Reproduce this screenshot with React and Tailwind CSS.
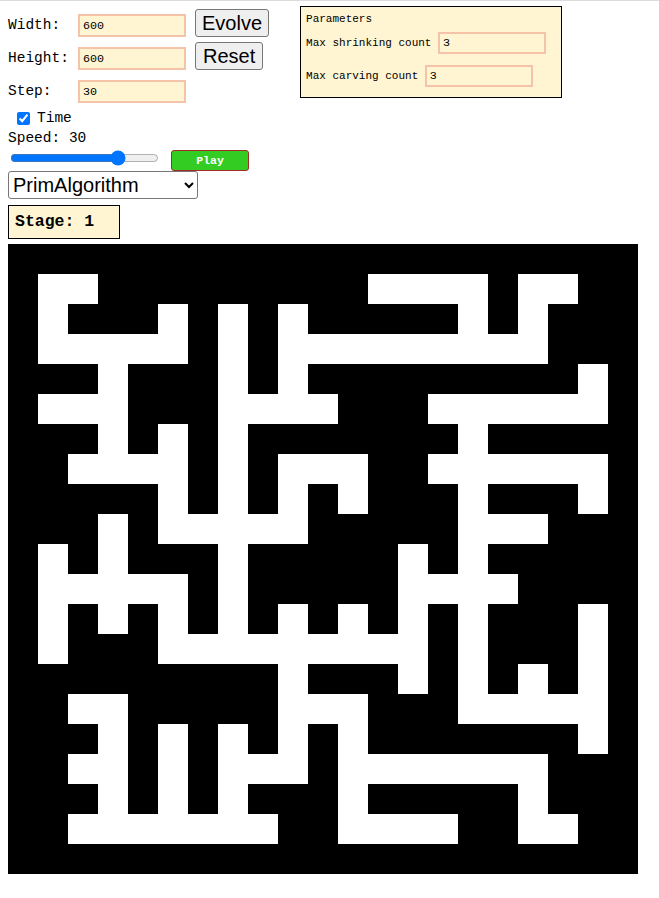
import React from 'react';

const MAZE = [
  '#####################',
  '#..#########....#..##',
  '#.###.#.#.#####.#.###',
  '#.....#.#.........###',
  '###.###.#.#########.#',
  '#...###....###......#',
  '###.#.#.#######.#####',
  '##....#.#...##......#',
  '#####.#.#.#.###.###.#',
  '###.#.....#####...###',
  '#.#.###.#####.#.#####',
  '#.....#.#####....####',
  '#.#.#.#.#.#.#.#.###.#',
  '#.###.........#.###.#',
  '#########.###.#.#.#.#',
  '##..#####...###.....#',
  '###.#.#.#.#.#######.#',
  '##..#.#...#.......###',
  '###.#.#.###.#####.###',
  '##.......##....##..##',
  '#####################',
];

const mono = "font-['Liberation_Mono','DejaVu_Sans_Mono',monospace]";
const sans = "font-['Liberation_Sans',Arial,sans-serif]";

function Field({ label, value }) {
  return (
    <div className="flex items-center h-[23px]">
      <span className="w-[70px] text-[14.5px] leading-none text-black">{label}</span>
      <input
        defaultValue={value}
        className={`w-[108px] h-[23px] border-2 border-[#f5c4a8] bg-[#fff5d3] pl-[3px] text-[11.7px] text-black outline-none ${mono}`}
      />
    </div>
  );
}

function ParamRow({ label, value }) {
  return (
    <div className="flex items-center h-[22px]">
      <span className="text-[11px] leading-none text-black whitespace-pre">{label} </span>
      <input
        defaultValue={value}
        className={`w-[108px] h-[22px] border-2 border-[#f5c4a8] bg-[#fff5d3] pl-[3px] text-[11.7px] text-black outline-none ${mono}`}
      />
    </div>
  );
}

export default function App() {
  return (
    <div className={`min-h-[898px] w-[659px] bg-white border-t border-[#dcdcdc] ${mono}`}>
      <div className="flex items-start">
        {/* size fields */}
        <div className="pl-2 pt-[13px] flex flex-col gap-[10px]">
          <Field label="Width:" value="600" />
          <Field label="Height:" value="600" />
          <Field label="Step:" value="30" />
        </div>

        {/* actions */}
        <div className="ml-[9px] pt-[8px] flex flex-col items-start gap-[5px]">
          <button className={`h-[28px] px-[6px] bg-[#efefef] border border-[#767676] rounded-[3px] text-[20px] leading-none text-black ${sans}`}>
            Evolve
          </button>
          <button className={`h-[28px] px-[7px] bg-[#efefef] border border-[#767676] rounded-[3px] text-[20px] leading-none text-black ${sans}`}>
            Reset
          </button>
        </div>

        {/* parameters */}
        <div className="ml-[31px] mt-[5px] w-[262px] h-[92px] border border-black bg-[#fff5d3] px-[5px] pt-[5px]">
          <div className="h-[15px] flex items-center text-[11px] text-black">Parameters</div>
          <div className="mt-[5px] flex flex-col gap-[11px]">
            <ParamRow label="Max shrinking count" value="3" />
            <ParamRow label="Max carving count" value="3" />
          </div>
        </div>
      </div>

      <div className="pl-2">
        <label className="mt-[8px] h-[14px] flex items-center">
          <input type="checkbox" defaultChecked className="ml-[9px] w-[13px] h-[13px] accent-[#0075ff]" />
          <span className="ml-[7px] text-[14.5px] leading-none text-black">Time</span>
        </label>

        <div className="mt-[5px] h-[17px] text-[14.5px] leading-[17px] text-black">Speed: 30</div>

        <div className="mt-[3px] flex items-start">
          <input
            type="range"
            min="0"
            max="40"
            defaultValue="30"
            className="ml-[2px] w-[149px] h-[16px] accent-[#0075ff]"
          />
          <button className="ml-[12px] w-[78px] h-[21px] bg-[#33cc22] border border-[#a52a2a] rounded-[3px] text-white text-[11.5px] font-bold leading-none">
            Play
          </button>
        </div>

        <select
          defaultValue="prim"
          className={`block w-[190px] h-[28px] border border-[#767676] rounded-[3px] bg-white pl-0 text-[20px] text-black ${sans}`}
        >
          <option value="prim">PrimAlgorithm</option>
          <option value="kruskal">KruskalAlgorithm</option>
        </select>

        <div className="mt-[6px] w-[112px] h-[34px] border border-black bg-[#fff5d3] flex items-center pl-[6px]">
          <span className="text-[16.5px] font-bold text-black leading-none">Stage: 1</span>
        </div>

        <div className="mt-[5px] grid grid-cols-[repeat(21,30px)] w-[630px]">
          {MAZE.map((row, r) =>
            row.split('').map((ch, c) => (
              <div key={`${r}-${c}`} className={ch === '#' ? 'h-[30px] bg-black' : 'h-[30px] bg-white'} />
            ))
          )}
        </div>
      </div>
    </div>
  );
}
